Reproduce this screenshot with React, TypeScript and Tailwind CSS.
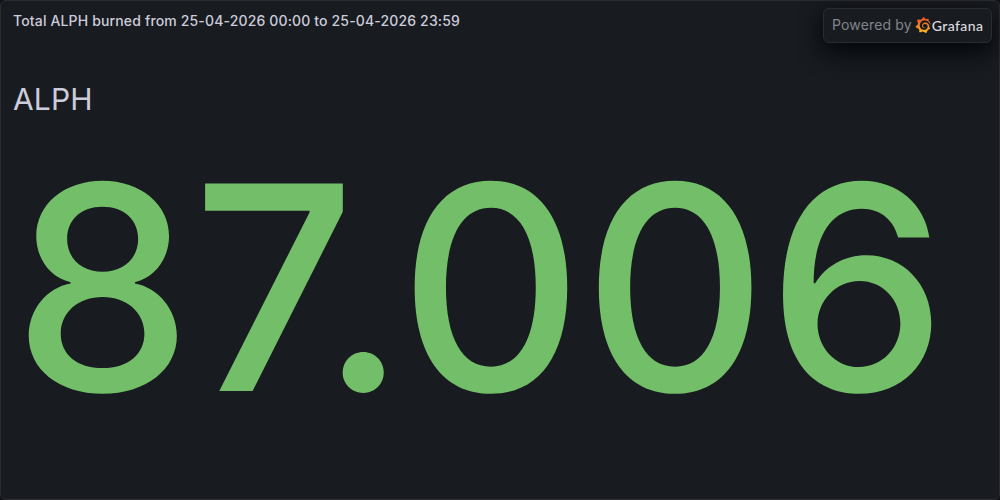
import { SiGrafana } from 'react-icons/si';

const panel = {
    title: "Total ALPH burned from 25-04-2026 00:00 to 25-04-2026 23:59",
    label: "ALPH",
    value: "87.006"
};

function GrafanaLogo() {
    return (
        <span className="flex items-center">
            <svg className="absolute size-0" aria-hidden="true">
                <defs>
                    <linearGradient id="grafana-flame" x1="0" y1="1" x2="0" y2="0">
                        <stop offset="0" stopColor="#fcc21f" />
                        <stop offset="0.35" stopColor="#f68d1f" />
                        <stop offset="1" stopColor="#ee4f28" />
                    </linearGradient>
                </defs>
            </svg>
            <SiGrafana className="-mt-px size-4 fill-[url(#grafana-flame)]" />
            <span className="ml-px font-['Lato',sans-serif] text-[14px] leading-none font-medium tracking-[0.4px] text-[#dcdde0]">Grafana</span>
        </span>
    );
}

export default function App() {
    return (
        <main className="h-[500px] w-[1000px] overflow-hidden bg-[#111217] font-['Inter',sans-serif] tracking-[0.15px] text-[#ccccdc]">
            <section className="relative flex h-full flex-col rounded-md border border-[#2a2c31] bg-[#181b1f]">
                <h2 className="flex h-10 items-center px-3 text-sm font-medium">{panel.title}</h2>

                <div className="flex flex-col px-3 pt-10">
                    <span className="text-[30px] leading-9">{panel.label}</span>
                    <span className="text-[285.1px] leading-[342px] font-medium text-[#73bf69]">{panel.value}</span>
                </div>

                <div className="absolute top-[7px] right-[7px] flex h-[35px] w-[169px] items-center rounded-md border border-[#2a2c31] bg-[#181b1f] pl-2 text-sm shadow-[0_8px_24px_rgb(1,4,9)]">
                    <span className="mr-[3px] -mt-0.5 text-[#83848f]">Powered by</span>
                    <GrafanaLogo />
                </div>
            </section>
        </main>
    );
}
